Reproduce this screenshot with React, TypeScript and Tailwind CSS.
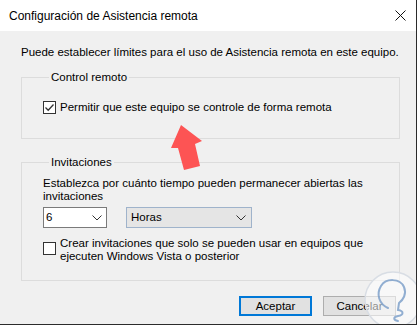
import React from "react";

const font = { fontFamily: '"Liberation Sans", Arial, sans-serif' };

const Chevron = () => (
  <svg width="10" height="6" viewBox="0 0 10 6" className="shrink-0">
    <path d="M0.5 0.5 L5 5 L9.5 0.5" fill="none" stroke="#333" strokeWidth="1" />
  </svg>
);

const CheckBox = ({ checked }: { checked?: boolean }) => (
  <div className="w-[13px] h-[13px] border border-[#333] bg-white flex items-center justify-center shrink-0">
    {checked && (
      <svg width="11" height="11" viewBox="0 0 11 11">
        <path d="M1.5 5.5 L4.2 8.2 L9.5 2.5" fill="none" stroke="#333" strokeWidth="1.3" />
      </svg>
    )}
  </div>
);

const GroupBox = ({
  title,
  className,
  children,
}: {
  title: string;
  className?: string;
  children: React.ReactNode;
}) => (
  <fieldset className={`border border-[#dcdcdc] ${className ?? ""}`}>
    <legend className="ml-[6px] px-[2px] leading-[13px]">{title}</legend>
    {children}
  </fieldset>
);

export default function App() {
  return (
    <div className="w-[418px] h-[326px] bg-white text-[11.5px] text-black" style={font}>
      <div className="relative w-[417px] h-[325px] border-r border-b border-[#2b2b2b] flex flex-col overflow-hidden">
        {/* Title bar */}
        <div className="h-[31px] bg-white flex items-center justify-between pl-[9px] pr-[10px] shrink-0">
          <span className="text-[12px] leading-[16px]">Configuración de Asistencia remota</span>
          <svg width="11" height="11" viewBox="0 0 11 11">
            <path d="M0.5 0.5 L10.5 10.5 M10.5 0.5 L0.5 10.5" stroke="#111" strokeWidth="1" />
          </svg>
        </div>

        {/* Body */}
        <div className="flex-1 bg-[#f0f0f0] pl-[21px] flex flex-col">
          <p className="mt-[15px] leading-[13px]">
            Puede establecer límites para el uso de Asistencia remota en este equipo.
          </p>

          <GroupBox title="Control remoto" className="w-[379px] mt-[12px] pl-[21px] pt-[17px] pb-[24px]">
            <div className="flex items-center gap-[4px] leading-[13px]">
              <CheckBox checked />
              <span>Permitir que este equipo se controle de forma remota</span>
            </div>
          </GroupBox>

          <GroupBox title="Invitaciones" className="w-[379px] mt-[17px] pl-[21px] pt-[8px] pb-[17px]">
            <p className="leading-[13px] w-[345px]">
              Establezca por cuánto tiempo pueden permanecer abiertas las invitaciones
            </p>
            <div className="flex gap-[19px] mt-[4px]">
              <div className="w-[64px] h-[21px] bg-white border border-[#7a7a7a] flex items-center justify-between pl-[2px] pr-[4px]">
                <span>6</span>
                <Chevron />
              </div>
              <div className="w-[126px] h-[21px] bg-[#e5e5e5] border border-[#9fb3cb] flex items-center justify-between pl-[4px] pr-[5px]">
                <span>Horas</span>
                <Chevron />
              </div>
            </div>
            <div className="flex items-start gap-[4px] mt-[9px] leading-[13px]">
              <div className="mt-[5px]">
                <CheckBox />
              </div>
              <span className="w-[330px]">
                Crear invitaciones que solo se pueden usar en equipos que ejecuten Windows Vista o posterior
              </span>
            </div>
          </GroupBox>

          <div className="w-[375px] flex justify-end gap-[11px] mt-[15px]">
            <button className="w-[73px] h-[20px] bg-[#e1e1e1] border-2 border-[#0078d7] flex items-center justify-center leading-[13px]">
              Aceptar
            </button>
            <button className="w-[73px] h-[20px] bg-[#e1e1e1] border border-[#adadad] flex items-center justify-center leading-[13px]">
              Cancelar
            </button>
          </div>
        </div>

        {/* Red arrow annotation */}
        <svg className="absolute left-0 top-0 pointer-events-none" width="417" height="325">
          <polygon
            points="181,125 202,141 195,144 200,166 184,170 178,148 171,148"
            fill="#fd5454"
          />
        </svg>

        {/* Watermark */}
        <svg className="absolute left-[362px] top-[268px] pointer-events-none" width="60" height="60" viewBox="0 0 60 60">
          <circle cx="31" cy="32" r="28" fill="#ffffff" fillOpacity="0.55" stroke="#d8dde4" strokeWidth="1.5" />
          <path
            d="M26 40 C17 36 14 26 19 18 C24 10 38 10 42 19 C45 26 41 32 37 35 L36 42 C42 43 42 47 36 48 C31 49 31 52 36 53"
            fill="none"
            stroke="#6f95c4"
            strokeOpacity="0.75"
            strokeWidth="2"
            strokeLinecap="round"
          />
        </svg>
      </div>
    </div>
  );
}
